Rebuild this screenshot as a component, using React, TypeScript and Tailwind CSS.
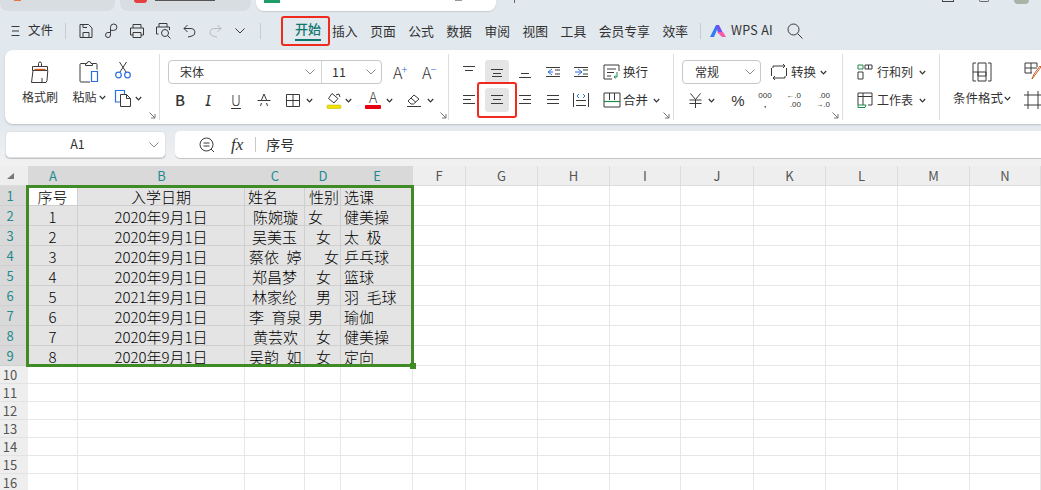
import type { ReactNode } from "react";

const ink = "#3a3a3a";

const Ico = ({ size = 16, children }: { size?: number; children: ReactNode }) => (
  <svg width={size} height={size} viewBox={`0 0 ${size} ${size}`} fill="none" stroke={ink} strokeWidth="1" className="shrink-0">
    {children}
  </svg>
);

const Chev = ({ big = false }: { big?: boolean }) =>
  big ? (
    <svg width="10" height="6" viewBox="0 0 10 6" fill="none" stroke="#8a8a8a" strokeWidth="1" className="shrink-0">
      <path d="M.5.5 5 5 9.5.5" />
    </svg>
  ) : (
    <svg width="7" height="5" viewBox="0 0 7 5" fill="none" stroke="#333" strokeWidth="1.2" className="shrink-0">
      <path d="M.8 1 3.5 3.8 6.2 1" />
    </svg>
  );

// small arrow in the corner of a ribbon group
const Launcher = () => (
  <svg width="7" height="7" viewBox="0 0 7 7" fill="none" stroke="#777" strokeWidth="1" className="shrink-0">
    <path d="M.5.5 6 6M6 2v4H2" />
  </svg>
);

const Lines = ({ rows }: { rows: [number, number, number][] }) => (
  <Ico size={16}>
    {rows.map(([a, y, b]) => (
      <path key={`${a}-${y}`} d={`M${a} ${y + 0.5}H${b}`} />
    ))}
  </Ico>
);

const BrushIcon = () => (
  <svg width="24" height="24" viewBox="0 0 24 24" fill="none" stroke={ink} strokeWidth="1">
    <path d="M10.5 6V3.5a1.5 1.5 0 0 1 3 0V6M4.500 6.500h15v4h-15z" />
    <path d="M5 10.500 3.500 22.500h14.500l1-2 .8-10" />
    <path d="M6.500 9.500h11" stroke="#d2591f" strokeWidth="1.4" />
    <path d="M14 22v-4" />
  </svg>
);

const PasteIcon = () => (
  <svg width="22" height="24" viewBox="0 0 22 24" fill="none" stroke={ink} strokeWidth="1">
    <path d="M7.5 3.5H3a1 1 0 0 0-1 1V21a1 1 0 0 0 1 1h9M14.5 3.5H18a1 1 0 0 1 1 1v5" />
    <path d="M7.5 5.5v-2H9a2 2 0 0 1 4 0h1.5v2z" />
    <path d="M13.5 11.5h6v10h-6z" stroke="#2c6fe0" strokeWidth="1.2" />
  </svg>
);

const ScissorsIcon = () => (
  <svg width="18" height="18" viewBox="0 0 18 18" fill="none">
    <path d="M6 11 12.5 1M12 11 5.5 1" stroke={ink} />
    <circle cx="4.5" cy="14" r="2.8" stroke="#2c6fe0" strokeWidth="1.2" />
    <circle cx="13.5" cy="14" r="2.8" stroke="#2c6fe0" strokeWidth="1.2" />
  </svg>
);

const CopyIcon = () => (
  <svg width="18" height="18" viewBox="0 0 18 18" fill="none" strokeWidth="1">
    <path d="M6 13H1.5V1.5h9V5" stroke="#2c6fe0" strokeWidth="1.2" />
    <path d="M6.5 5.5h6l4 4v8h-10z" stroke={ink} />
    <path d="M12.5 5.5v4h4" stroke={ink} />
  </svg>
);

const App = () => {
  const menus = ["插入", "页面", "公式", "数据", "审阅", "视图", "工具", "会员专享", "效率"];
  const rows: [string, string, string, string, string, string, string, string][] = [
    ["1", "2020年9月1日", "陈婉璇", "pl-[8px]", "女", "pl-[3px]", "健美操", "pl-[3px]"],
    ["2", "2020年9月1日", "吴美玉", "pl-[7px]", "女", "pl-[11px]", "太\u2002极", "pl-[3px]"],
    ["3", "2020年9月1日", "蔡依\u2002婷", "pl-[4px]", "女", "pl-[19px]", "乒乓球", "pl-[3px]"],
    ["4", "2020年9月1日", "郑昌梦", "pl-[7px]", "女", "pl-[11px]", "篮球", "pl-[3px]"],
    ["5", "2021年9月1日", "林家纶", "pl-[7px]", "男", "pl-[11px]", "羽\u2002毛球", "pl-[3px]"],
    ["6", "2020年9月1日", "李\u2002育泉", "pl-[4px]", "男", "pl-[3px]", "瑜伽", "pl-[3px]"],
    ["7", "2020年9月1日", "黄芸欢", "pl-[8px]", "女", "pl-[11px]", "健美操", "pl-[3px]"],
    ["8", "2020年9月1日", "吴韵\u2002如", "pl-[4px]", "女", "pl-[11px]", "定向", "pl-[3px]"],
  ];
  const selCols = ["A", "B", "C", "D", "E"];
  const restCols = ["F", "G", "H", "I", "J", "K", "L", "M", "N"];
  const emptyRows = ["10", "11", "12", "13", "14", "15", "16"];
  const selCell = "flex h-[20px] items-center border-b border-r border-[#cfcfcf] bg-[#e4e4e4] pt-[2px] text-[15px] leading-none font-light whitespace-pre text-black";
  const blank = "h-[20px] border-b border-r border-[#e6e6e6]";

  return (
    <div className="h-[490px] w-full overflow-hidden bg-white font-['Noto_Sans_CJK_SC','Noto_Sans',sans-serif] text-[13px] text-[#333]">
      <div className="h-[166px] bg-linear-to-b from-[#e1e8ee] from-70% to-[#f1f1f1]">
        {/* Window tabs, cut off by the top edge */}
        <div className="flex h-[11px] items-stretch">
          <div className="flex w-[115px] items-start rounded-b-lg bg-[#d7dde1] pl-[14px]">
            <div className="h-[1px] w-[7px] bg-[#e8743b]" />
          </div>
          <div className="ml-[5px] flex w-[131px] items-start rounded-b-lg bg-[#d7dde1] pl-[14px]">
            <div className="h-[3px] w-[13px] rounded-b-sm bg-[#e5403f]" />
            <div className="ml-[8px] h-[1px] w-[60px] bg-[#555]" />
          </div>
          <div className="ml-[5px] flex w-[240px] items-start justify-between rounded-b-lg bg-white pr-[34px] pl-[8px] shadow-[0_1px_1px_#c5ccd2]">
            <div className="h-[3px] w-[16px] bg-[#1f9d66]" />
            <div className="h-[1px] w-[7px] bg-[#999]" />
          </div>
          <div className="ml-[18px] h-[3px] w-[1px] bg-[#666]" />
          <div className="ml-auto flex items-start gap-[25px] pr-[12px]">
            <div className="h-[2px] w-[12px] border-b border-x border-[#444]" />
            <div className="h-[2px] w-[10px] rounded-b-full border-b border-x border-[#666]" />
            <div className="h-[4px] w-[15px] rounded-b-full bg-[#a9b3a6]" />
          </div>
        </div>

        {/* Menu row */}
        <div className="flex h-[39px] items-center">
          <svg width="9" height="10" viewBox="0 0 9 10" stroke={ink} className="ml-[11px]">
            <path d="M.5 .5h8M1 5h7M.5 9.500h8" />
          </svg>
          <span className="ml-[8px] text-[12.500px]">文件</span>
          <div className="ml-[12px] h-[16px] w-px bg-[#c6ccd2]" />
          <div className="ml-[12px] flex items-center">
            <Ico>
              <path d="M2 1.500h8.500l3.500 3.500v9.500H2zM5 14.500v-5h6v5M5 1.500v3h4" />
            </Ico>
            <svg width="16" height="16" viewBox="0 0 16 16" fill="none" stroke={ink} className="ml-[10px]">
              <path d="M6.500 9.500V4.200a3.200 3.200 0 1 1 3.200 3.200H6.500M6.500 9.500H4a2.500 2.500 0 1 0 2.500 2.500V9.500" />
            </svg>
            <svg width="16" height="16" viewBox="0 0 16 16" fill="none" stroke={ink} className="ml-[9px]">
              <path d="M4 5V1.500h8V5M4 12H1.500V5h13v7H12M4 9.500h8v5H4z" />
            </svg>
            <svg width="17" height="17" viewBox="0 0 17 17" fill="none" stroke={ink} className="ml-[10px]">
              <path d="M4 5V1.500h8V5M3.500 12H1.500V5h13v3" />
              <circle cx="10" cy="11" r="3.500" />
              <path d="m12.500 13.500 3 3" />
            </svg>
            <svg width="13" height="14" viewBox="0 0 13 14" fill="none" stroke={ink} className="ml-[11px]">
              <path d="M4.500 1 1 4.500 4.500 8M1 4.500h7a3.800 3.800 0 0 1 1 7.500L5 13" />
            </svg>
            <svg width="13" height="14" viewBox="0 0 13 14" fill="none" stroke="#bbb" className="ml-[13px]">
              <path d="M8.500 1 12 4.500 8.500 8M12 4.500H5a3.800 3.800 0 0 0-1 7.500l4 1" />
            </svg>
            <svg width="10" height="6" viewBox="0 0 10 6" fill="none" stroke={ink} className="ml-[13px]">
              <path d="M.5.5 5 5 9.500.5" />
            </svg>
          </div>
          <div className="ml-[15px] h-[16px] w-px bg-[#c6ccd2]" />
          <div className="relative ml-[34px] flex h-[30px] items-center">
            <span className="border-b-2 border-[#0f766e] pb-[1px] text-[13px] leading-[18px] font-medium text-[#0f766e]">开始</span>
            <div className="absolute -right-[9px] -left-[14px] inset-y-0 rounded-[3px] border-[2.500px] border-[#f02a1c]" />
          </div>
          <div className="ml-[11px] flex items-center gap-[12.500px]">
            {menus.map((m) => (
              <span key={m} className="text-[12.800px]">{m}</span>
            ))}
          </div>
          <div className="ml-[12px] h-[16px] w-px bg-[#c6ccd2]" />
          <svg width="16" height="12" viewBox="0 0 16 12" className="ml-[9px]">
            <path d="M0 12 6 0h3L4 12z" fill="#2f7bf0" />
            <path d="M6 0h3l4 8h-5z" fill="#7a4df0" />
            <path d="M7 7h6l3 5h-4z" fill="#f25ca8" />
          </svg>
          <span className="ml-[5px] text-[12.500px] tracking-[0.3px]">WPS AI</span>
          <svg width="16" height="16" viewBox="0 0 16 16" fill="none" stroke={ink} className="ml-[14px]">
            <circle cx="6.500" cy="6.500" r="5.500" />
            <path d="m10.500 10.500 5 5" />
          </svg>
        </div>

        {/* Ribbon */}
        <div className="ml-[5px] flex h-[74px] rounded-l-lg bg-white py-[4px] shadow-[0_1px_2px_#b9c0c6]">
          {/* Clipboard */}
          <div className="flex w-[155px] shrink-0 border-r border-[#dcdfe2] pr-[3px] pb-[1px]">
            <div className="ml-[17px] flex w-[36px] flex-col items-center pt-[6px]">
              <BrushIcon />
              <span className="mt-[4px] text-[12px]">格式刷</span>
            </div>
            <div className="ml-[13px] flex w-[36px] flex-col items-center pt-[6px]">
              <PasteIcon />
              <span className="mt-[4px] flex items-center gap-[2px] text-[12px]">粘贴<Chev /></span>
            </div>
            <div className="ml-[4px] flex flex-col pt-[7px] pl-[3px]">
              <ScissorsIcon />
              <span className="mt-[10px] flex items-center gap-[3px]"><CopyIcon /><Chev /></span>
            </div>
            <div className="ml-auto self-end"><Launcher /></div>
          </div>

          {/* Font */}
          <div className="flex w-[289px] shrink-0 border-r border-[#dcdfe2] pr-[3px] pb-[1px]">
            <div className="flex flex-1 flex-col gap-[4px] pt-[6px]">
              <div className="flex h-[24px] items-center">
                <div className="ml-[8px] flex h-[24px] w-[214px] rounded-[4px] border border-[#c9c9c9]">
                  <div className="flex w-[153px] items-center justify-between border-r border-[#d5d5d5] pr-[6px] pl-[11px] text-[12px]">宋体<Chev big /></div>
                  <div className="flex flex-1 items-center justify-between pr-[5px] pl-[10px] text-[12.500px]">11<Chev big /></div>
                </div>
                <span className="ml-[11px] flex w-[18px] items-start text-[16px] leading-none font-light">A<span className="-ml-[1px] text-[11px] leading-none text-[#2c6fe0]">+</span></span>
                <span className="ml-[11px] flex w-[18px] items-start text-[16px] leading-none font-light">A<span className="-ml-[1px] text-[11px] leading-none text-[#2c6fe0]">−</span></span>
              </div>
              <div className="flex h-[24px] items-center pl-[6px]">
                <span className="w-[28px] text-center text-[15px] font-medium">B</span>
                <span className="w-[28px] text-center font-['Liberation_Serif',serif] text-[15px] italic underline decoration-1 underline-offset-0">I</span>
                <span className="w-[28px] text-center text-[14px] font-light underline decoration-1 underline-offset-2">U</span>
                <div className="flex w-[28px] justify-center">
                  <Ico>
                    <path d="M8 2 5.500 8M8 2l2.500 6M1.500 8.500h13M4.500 14l1-3M11.500 14l-1-3" />
                  </Ico>
                </div>
                <div className="ml-[7px] flex w-[32px] items-center gap-[5px]">
                  <Ico>
                    <path d="M1.500 2.500h13v12h-13zM8 2.500v12M1.500 8.500h13" />
                  </Ico>
                  <Chev />
                </div>
                <div className="ml-[9px] flex w-[29px] items-center gap-[3px]">
                  <svg width="16" height="17" viewBox="0 0 16 17" fill="none" stroke={ink}>
                    <path d="m6 1.500 6 5-4 4.500-5.500-4.500zM10 3l3-1 1 3" />
                    <rect x="1" y="13" width="14" height="3.500" rx="1" fill="#f1e300" stroke="#b8ad00" strokeWidth=".5" />
                  </svg>
                  <Chev />
                </div>
                <div className="ml-[10px] flex w-[32px] items-center gap-[5px]">
                  <div className="flex w-[16px] flex-col items-center">
                    <span className="text-[14px] leading-[13px] font-light">A</span>
                    <div className="mt-[1px] h-[4px] w-[16px] rounded-[1px] bg-[#e60012]" />
                  </div>
                  <Chev />
                </div>
                <div className="ml-[9px] flex w-[32px] items-center gap-[5px]">
                  <Ico>
                    <path d="m2 9 6-6 5 4-5.500 5H5zM5 6l5 4.500M1 14.500h14" />
                  </Ico>
                  <Chev />
                </div>
              </div>
            </div>
            <div className="self-end"><Launcher /></div>
          </div>

          {/* Alignment */}
          <div className="flex w-[225px] shrink-0 border-r border-[#dcdfe2] pr-[3px] pb-[1px]">
            <div className="flex flex-1 flex-col gap-[4px] pt-[6px]">
              <div className="flex h-[24px] items-center pl-[6px]">
                <div className="flex w-[28px] justify-center"><Lines rows={[[2, 2, 14], [4, 6, 12]]} /></div>
                <div className="flex w-[28px] justify-center">
                  <div className="flex h-[24px] w-[24px] items-center justify-center rounded-[3px] bg-[#e5e5e5]"><Lines rows={[[2, 5, 14], [4, 9, 12], [3, 12, 13]]} /></div>
                </div>
                <div className="flex w-[28px] justify-center"><Lines rows={[[4, 9, 12], [2, 13, 14]]} /></div>
                <div className="flex w-[28px] justify-center">
                  <Ico>
                    <path d="M1 3.500h14M10 6h5M1 12.500h14M10 10h5" />
                    <path d="M7 5 3 8l4 3M3 8h5" stroke="#2c6fe0" />
                  </Ico>
                </div>
                <div className="flex w-[28px] justify-center">
                  <Ico>
                    <path d="M1 3.500h14M10 6h5M1 12.500h14M10 10h5" />
                    <path d="m5 5 4 3-4 3M9 8H2" stroke="#2c6fe0" />
                  </Ico>
                </div>
                <div className="ml-[8px] flex items-center gap-[2px]">
                  <svg width="18" height="16" viewBox="0 0 18 16" fill="none" stroke={ink}>
                    <path d="M16 7V1H1v14h8M4 5h9M4 8.500h7M4 12h4" />
                    <path d="M14 8v5h-3M12.500 11.500 11 13l1.500 1.500" stroke="#1f8a4c" />
                  </svg>
                  <span className="text-[12.500px]">换行</span>
                </div>
              </div>
              <div className="flex h-[24px] items-center pl-[6px]">
                <div className="flex w-[28px] justify-center"><Lines rows={[[2, 3, 14], [2, 7, 10], [2, 11, 14]]} /></div>
                <div className="relative flex w-[28px] justify-center">
                  <div className="flex h-[24px] w-[24px] items-center justify-center rounded-[3px] bg-[#e5e5e5]"><Lines rows={[[2, 3, 14], [4, 7, 12], [2, 11, 14]]} /></div>
                  <div className="absolute -inset-x-[6px] -inset-y-[6px] rounded-[3px] border-[2.500px] border-[#f02a1c]" />
                </div>
                <div className="flex w-[28px] justify-center"><Lines rows={[[2, 3, 14], [6, 7, 14], [2, 11, 14]]} /></div>
                <div className="flex w-[28px] justify-center"><Lines rows={[[2, 3, 14], [2, 7, 14], [2, 11, 14]]} /></div>
                <div className="flex w-[28px] justify-center">
                  <Ico>
                    <path d="M.5 1v14M15.500 1v14M3 8.500h10M3 13.500h10" />
                    <path d="M6 2 4 4l2 2M10 2l2 2-2 2" stroke="#2c6fe0" />
                  </Ico>
                </div>
                <div className="ml-[8px] flex items-center gap-[2px]">
                  <svg width="18" height="16" viewBox="0 0 18 16" fill="none" stroke={ink}>
                    <path d="M1 1h16v14H1zM6.500 1v7M11.500 1v7" />
                    <path d="M1 9.500h16" stroke="#1f8a4c" strokeWidth="1.200" />
                  </svg>
                  <span className="text-[12.500px]">合并</span>
                  <span className="ml-[3px]"><Chev /></span>
                </div>
              </div>
            </div>
            <div className="self-end"><Launcher /></div>
          </div>

          {/* Number */}
          <div className="flex w-[169px] shrink-0 border-r border-[#dcdfe2] pr-[3px] pb-[1px]">
            <div className="flex flex-1 flex-col gap-[4px] pt-[6px]">
              <div className="flex h-[24px] items-center pl-[8px]">
                <div className="flex h-[24px] w-[79px] items-center justify-between rounded-[4px] border border-[#c9c9c9] pr-[5px] pl-[12px] text-[12px]">常规<Chev big /></div>
                <svg width="16" height="16" viewBox="0 0 16 16" fill="none" stroke={ink} className="ml-[10px]">
                  <path d="M2 4V2h12M12 0l2 2-2 2M14 12v2H2M4 12l-2 2 2 2M.5 4v8M15.500 4v8" />
                </svg>
                <span className="ml-[4px] text-[12.500px]">转换</span>
                <span className="ml-[4px]"><Chev /></span>
              </div>
              <div className="flex h-[24px] items-center font-['Liberation_Sans',sans-serif]">
                <svg width="13" height="15" viewBox="0 0 13 15" fill="none" stroke={ink} className="ml-[15px]">
                  <path d="m1.500.5 5 6 5-6M6.500 6.500V15M.5 7h12M.5 10.500h12" />
                </svg>
                <span className="ml-[6px]"><Chev /></span>
                <span className="ml-[16px] w-[14px] text-center text-[15px] leading-none">%</span>
                <div className="ml-[12px] flex w-[16px] flex-col items-center text-[8px] leading-[9px]">
                  <span>000</span>
                  <span className="font-bold">,</span>
                </div>
                <div className="ml-[12px] flex w-[16px] flex-col text-right text-[8px] leading-[9px]">
                  <span>←.0</span>
                  <span>.00</span>
                </div>
                <div className="ml-[13px] flex w-[16px] flex-col text-right text-[8px] leading-[9px]">
                  <span>.00</span>
                  <span>→.0</span>
                </div>
              </div>
            </div>
            <div className="self-end"><Launcher /></div>
          </div>

          {/* Rows and columns */}
          <div className="flex w-[97px] shrink-0 flex-col gap-[4px] border-r border-[#dcdfe2] pt-[6px] pl-[14px]">
            <div className="flex h-[24px] items-center gap-[4px]">
              <svg width="16" height="16" viewBox="0 0 16 16" fill="none" stroke={ink}>
                <path d="M1 1h5v4H1z" stroke="#1f8a4c" />
                <path d="M1 8h5v7H1zM8 1h7v4H8zM11.500 1v4" />
              </svg>
              <span className="text-[12px]">行和列</span>
              <span className="ml-[2px]"><Chev /></span>
            </div>
            <div className="flex h-[24px] items-center gap-[4px]">
              <svg width="16" height="16" viewBox="0 0 16 16" fill="none" stroke={ink}>
                <path d="M1 13V1h14v12h-4M1 4.500h14M6 1v12" />
                <path d="M1 13h8l-1 2.500H1z" stroke="#1f8a4c" />
              </svg>
              <span className="text-[12px]">工作表</span>
              <span className="ml-[2px]"><Chev /></span>
            </div>
          </div>

          {/* Styles */}
          <div className="flex flex-1 overflow-hidden">
            <div className="ml-[12px] flex w-[60px] shrink-0 flex-col items-center pt-[8px]">
              <svg width="20" height="20" viewBox="0 0 20 20" fill="none" stroke={ink}>
                <path d="M4 1H1v18h3M16 1h3v18h-3M6 1h8M1 10h5M6 1v18h8M6 10h8v4H6zM14 1v18" />
              </svg>
              <span className="mt-[7px] flex items-center gap-[1px] text-[12.500px] whitespace-nowrap">条件格式<Chev /></span>
            </div>
            <div className="ml-[12px] flex shrink-0 flex-col pt-[8px]">
              <svg width="18" height="18" viewBox="0 0 18 18" fill="none" stroke={ink}>
                <path d="M8 11H1V1h12v4M7 1v10M1 6h12" />
                <path d="m8 17 2-5 6-8 1 1-6 8z" stroke="#c8622a" />
              </svg>
              <svg width="18" height="18" viewBox="0 0 18 18" fill="none" stroke={ink} className="mt-[11px]">
                <path d="M0 4h18M0 14h18M4 0v18M14 0v18" />
              </svg>
            </div>
          </div>
        </div>

        {/* Formula bar */}
        <div className="mt-[7px] flex h-[27px] pl-[5px]">
          <div className="flex w-[161px] items-center rounded-[5px] border border-[#dfe2e5] bg-white pr-[6px] shadow-[0_1px_0_#c4c4c4]">
            <span className="flex-1 text-center text-[12.500px]">A1</span>
            <Chev big />
          </div>
          <div className="ml-[9px] flex flex-1 items-center rounded-l-[5px] bg-white pl-[24px] shadow-[0_1px_0_#c4c4c4]">
            <svg width="16" height="16" viewBox="0 0 16 16" fill="none" stroke={ink}>
              <circle cx="7.500" cy="7.500" r="6.500" />
              <path d="M4.500 6h6M4.500 9h6M12 12l3 3" />
            </svg>
            <span className="ml-[16px] font-['Liberation_Serif',serif] text-[17px] italic">fx</span>
            <div className="ml-[12px] h-[15px] w-px bg-[#c8c8c8]" />
            <span className="ml-[10px] text-[14px]">序号</span>
          </div>
        </div>
      </div>

      {/* Sheet */}
      <div className="relative grid grid-cols-[28px_50px_167px_60px_36px_72px_53px_72px_72px_71px_73px_72px_72px_72px_71px] text-[13px]">
        <div className="flex h-[20px] items-center justify-center border-b border-[#dcdcdc] bg-[#eeeeee] pr-[8px]">
          <svg width="7" height="6" viewBox="0 0 7 6"><path d="M7 0v6H0z" fill="#777" /></svg>
        </div>
        {selCols.map((c) => (
          <div key={c} className="flex h-[20px] items-center justify-center border-b border-[#cfcfcf] bg-[#d9d9d9] text-[#1f8a8f]">{c}</div>
        ))}
        {restCols.map((c) => (
          <div key={c} className="flex h-[20px] items-center justify-center border-r border-b border-[#dcdcdc] bg-[#eeeeee] text-[#555]">{c}</div>
        ))}

        <div className="flex h-[20px] items-center justify-center border-b border-[#cfcfcf] bg-[#d9d9d9] pr-[8px] text-[#1f8a8f]">1</div>
        <div className={`${selCell} justify-center !bg-white`}>序号</div>
        <div className={`${selCell} justify-center`}>入学日期</div>
        <div className={`${selCell} pl-[3px]`}>姓名</div>
        <div className={`${selCell} pl-[4px]`}>性别</div>
        <div className={`${selCell} pl-[3px]`}>选课</div>
        {restCols.map((c) => <div key={c} className={blank} />)}

        {rows.map((r, i) => [
          <div key={`h${i}`} className="flex h-[20px] items-center justify-center border-b border-[#cfcfcf] bg-[#d9d9d9] pr-[8px] text-[#1f8a8f]">{i + 2}</div>,
          <div key={`a${i}`} className={`${selCell} justify-center`}>{r[0]}</div>,
          <div key={`b${i}`} className={`${selCell} justify-center`}>{r[1]}</div>,
          <div key={`c${i}`} className={`${selCell} ${r[3]}`}>{r[2]}</div>,
          <div key={`d${i}`} className={`${selCell} ${r[5]}`}>{r[4]}</div>,
          <div key={`e${i}`} className={`${selCell} ${r[7]}`}>{r[6]}</div>,
          ...restCols.map((c) => <div key={`${c}${i}`} className={blank} />),
        ])}

        {emptyRows.map((n) => [
          <div key={`h${n}`} className="flex h-[18px] items-center justify-center border-b border-[#e2e2e2] bg-[#eeeeee] pr-[8px] text-[#555]">{n}</div>,
          ...[...selCols, ...restCols].map((c) => <div key={`${c}${n}`} className="h-[18px] border-r border-b border-[#e6e6e6]" />),
        ])}

        {/* Selection outline over A1:E9 */}
        <div className="absolute top-[19px] left-[26px] h-[182px] w-[388px] border-[3px] border-[#3f8c26]" />
        <div className="absolute top-[197px] left-[410px] h-[6px] w-[6px] bg-[#3f8c26]" />
      </div>
    </div>
  );
};

export default App;
